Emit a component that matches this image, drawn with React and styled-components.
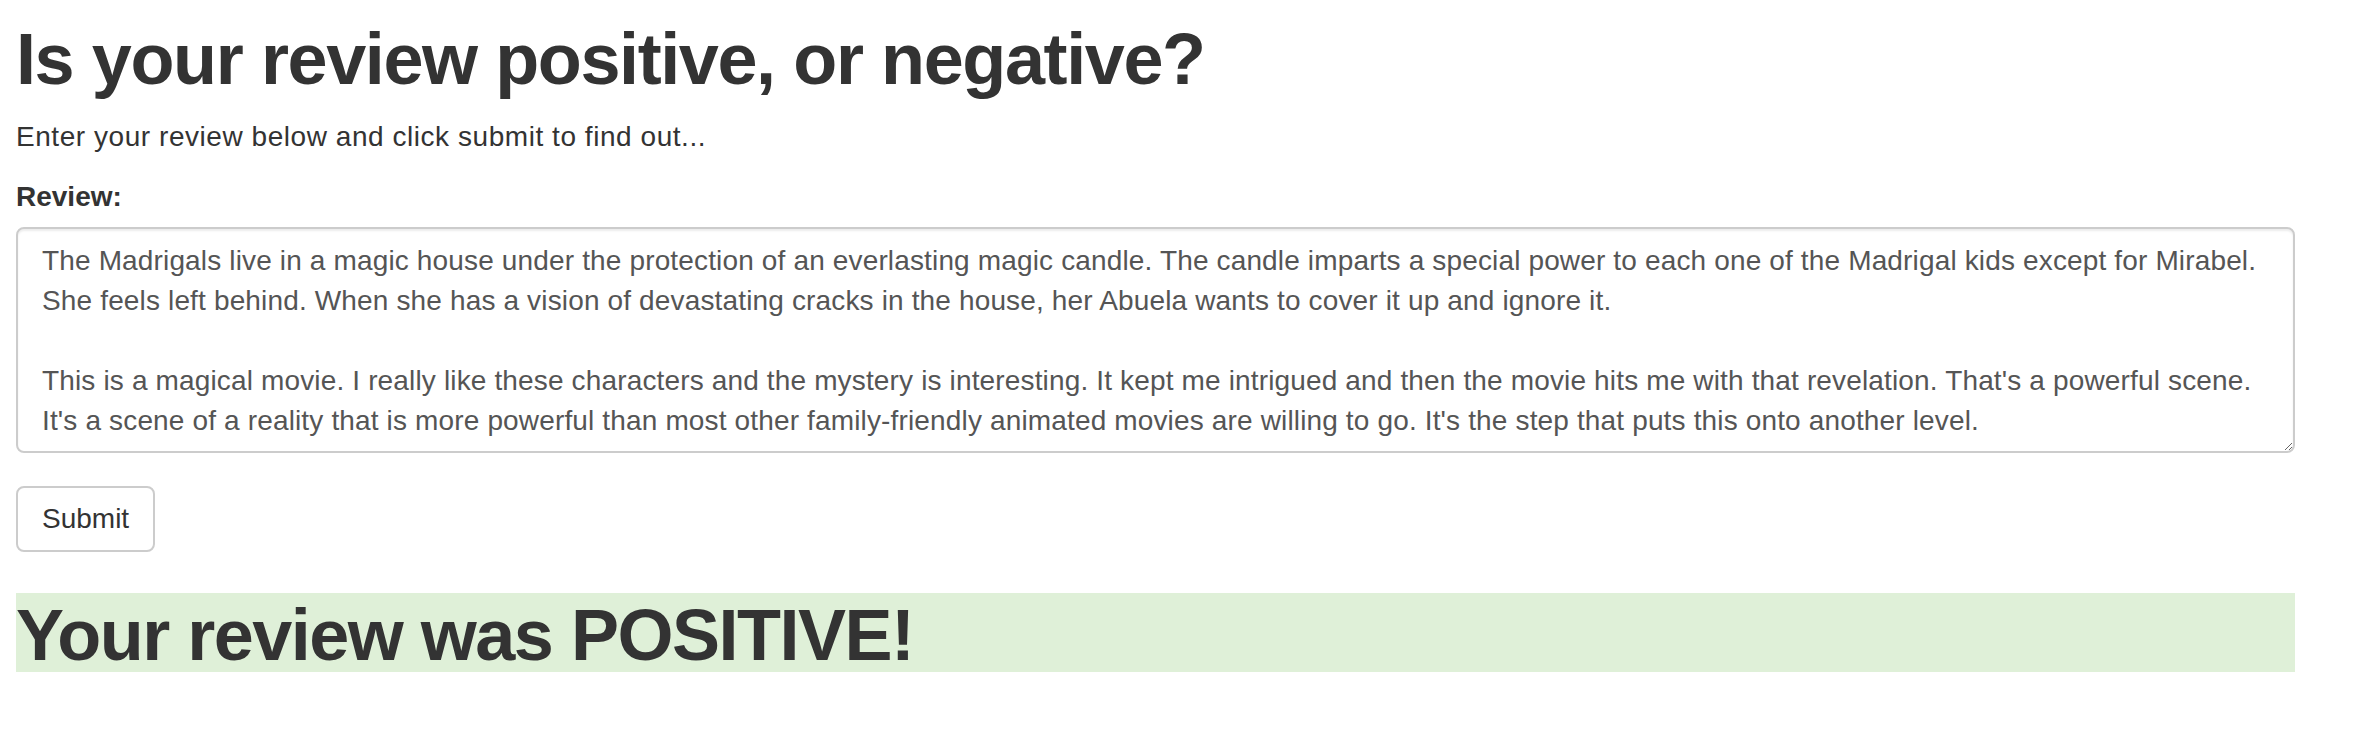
import React from "react";
import styled, { createGlobalStyle } from "styled-components";

const GlobalStyle = createGlobalStyle`
  body {
    margin: 0;
    background: #fff;
    color: #333;
    font-family: "Liberation Sans", Arial, sans-serif;
  }
`;

const Page = styled.div`
  width: 2279px;
  padding: 20px 0 40px 16px;
`;

const Heading = styled.h1`
  margin: 0 0 18px;
  font-size: 72px;
  line-height: 79px;
  font-weight: 700;
  letter-spacing: -1.4px;
  color: #333;
`;

const Lead = styled.p`
  margin: 0 0 20px;
  font-size: 28px;
  line-height: 40px;
  letter-spacing: 0.55px;
`;

const Form = styled.form`
  display: flex;
  flex-direction: column;
  align-items: flex-start;
`;

const FormGroup = styled.div`
  width: 100%;
  margin-bottom: 33px;
`;

const Label = styled.label`
  display: block;
  margin-bottom: 10px;
  font-size: 28px;
  line-height: 40px;
  font-weight: 700;
`;

const TextArea = styled.textarea`
  display: block;
  box-sizing: border-box;
  width: 100%;
  height: 226px;
  margin: 0;
  padding: 12px 24px 10px;
  overflow: hidden;
  border: 2px solid #ccc;
  border-radius: 8px;
  box-shadow: inset 0 2px 2px rgba(0, 0, 0, 0.075);
  font-family: "Liberation Sans", Arial, sans-serif;
  font-size: 28px;
  line-height: 40px;
  letter-spacing: 0.15px;
  color: #555;
  background: #fff;
  outline: none;
`;

const Button = styled.button`
  padding: 11px 24px;
  border: 2px solid #ccc;
  border-radius: 8px;
  background: #fff;
  color: #333;
  font-family: "Liberation Sans", Arial, sans-serif;
  font-size: 28px;
  line-height: 40px;
  cursor: pointer;
`;

const Result = styled.h1`
  margin: 41px 0 0;
  padding-top: 6px;
  font-size: 72px;
  line-height: 73px;
  font-weight: 700;
  letter-spacing: -1.5px;
  color: #333;
  background: ${props => (props.positive ? "#dff0d8" : "#f2dede")};
`;

const review = `The Madrigals live in a magic house under the protection of an everlasting magic candle. The candle imparts a special power to each one of the Madrigal kids except for Mirabel. She feels left behind. When she has a vision of devastating cracks in the house, her Abuela wants to cover it up and ignore it.

This is a magical movie. I really like these characters and the mystery is interesting. It kept me intrigued and then the movie hits me with that revelation. That's a powerful scene. It's a scene of a reality that is more powerful than most other family-friendly animated movies are willing to go. It's the step that puts this onto another level.`;

export default function App() {
  return (
    <>
      <GlobalStyle />
      <Page>
        <Heading>Is your review positive, or negative?</Heading>
        <Lead>Enter your review below and click submit to find out...</Lead>
        <Form onSubmit={e => e.preventDefault()}>
          <FormGroup>
            <Label htmlFor="review">Review:</Label>
            <TextArea id="review" defaultValue={review} />
          </FormGroup>
          <Button type="submit">Submit</Button>
        </Form>
        <Result positive>Your review was POSITIVE!</Result>
      </Page>
    </>
  );
}
